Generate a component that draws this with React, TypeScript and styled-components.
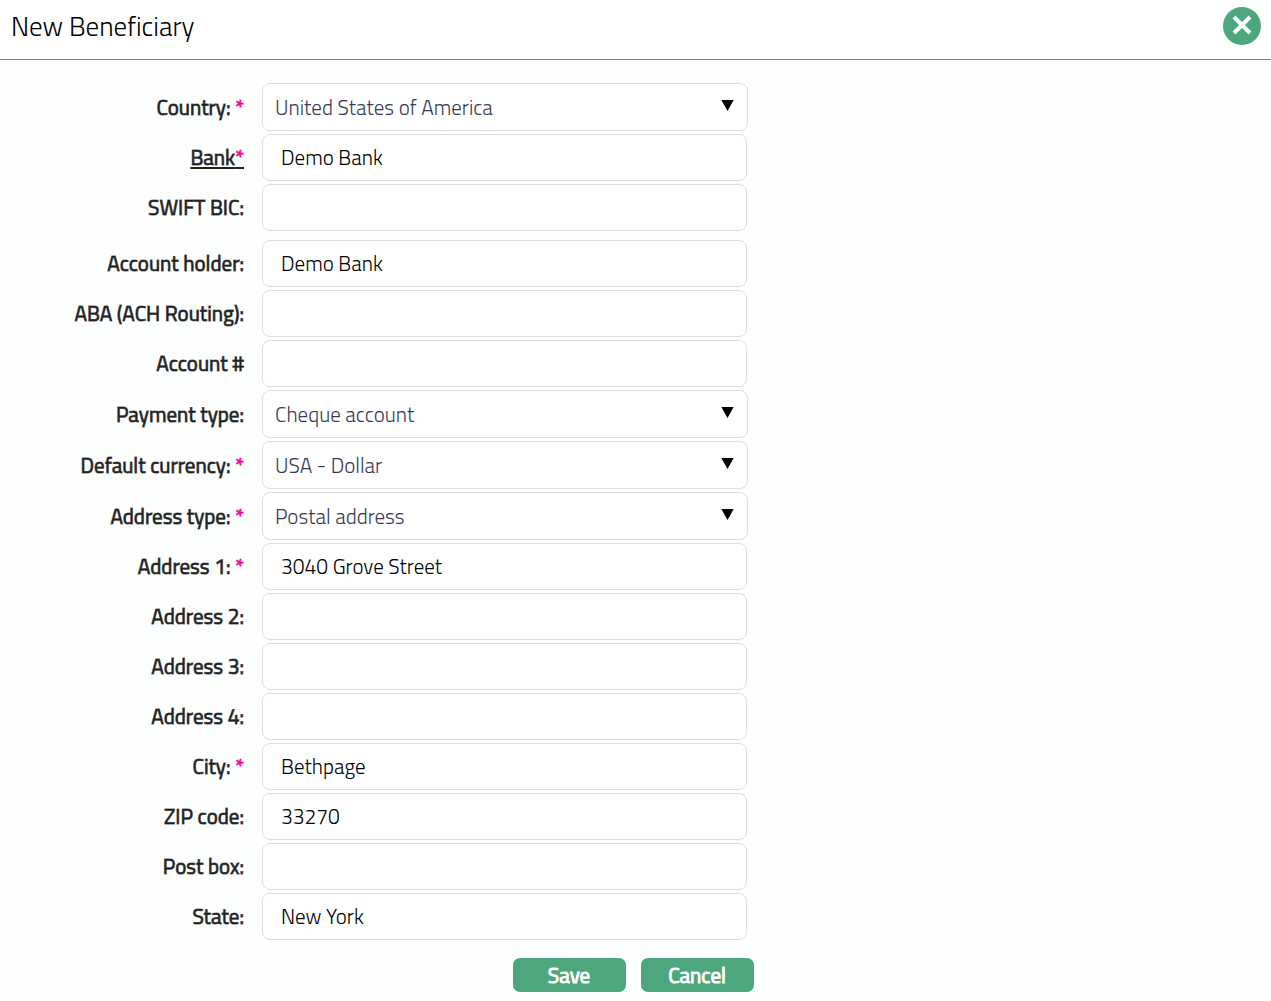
import React from "react";
import styled, { createGlobalStyle } from "styled-components";

const GlobalStyle = createGlobalStyle`
  *, *::before, *::after { box-sizing: border-box; }
  body {
    margin: 0;
    background: #fdfffe;
    color: #212121;
    font-family: "Titillium Web", Roboto, "Liberation Sans", sans-serif;
    font-size: 21px;
  }
`;

const Header = styled.header`
  display: flex;
  align-items: center;
  justify-content: space-between;
  height: 60px;
  padding: 0 10px 8px 11px;
  background: #fff;
  border-bottom: 1px solid #777c7b;
`;

const Title = styled.h1`
  margin: 0;
  color: #000;
  font-size: 27px;
  line-height: 32px;
  font-weight: 300;
`;

const CloseButton = styled.button`
  display: flex;
  width: 38px;
  height: 38px;
  padding: 0;
  border: 0;
  border-radius: 50%;
  background: #4da77c;
  cursor: pointer;
`;

const Fields = styled.div`
  display: flex;
  flex-direction: column;
  gap: 3px;
  padding-top: 23px;
  background: #fcfffe;
`;

const Row = styled.div<{ $spaced?: boolean }>`
  display: grid;
  grid-template-columns: 244px minmax(0, 486px);
  column-gap: 18px;
  align-items: center;
  margin-top: ${(p) => (p.$spaced ? "6px" : "0")};
`;

const Label = styled.label<{ $underlined?: boolean }>`
  justify-self: end;
  padding-bottom: 1px;
  line-height: 24px;
  font-weight: 400;
  -webkit-text-stroke: 1px rgba(33, 33, 33, 0.7);
  white-space: pre;
  text-decoration: ${(p) => (p.$underlined ? "underline" : "none")};
  text-decoration-color: #212121;
  text-decoration-thickness: 2px;
  text-underline-offset: 2px;
`;

const Required = styled.span`
  color: #f5009b;
  -webkit-text-stroke: 1px rgba(245, 0, 155, 0.7);
`;

const TextInput = styled.input`
  width: calc(100% - 1px);
  height: 47px;
  padding: 0 18px 1px;
  border: 1px solid #dcdfde;
  border-radius: 8px;
  background: #fff;
  color: #000;
  font: inherit;
  font-weight: 300;
`;

const SelectBox = styled.div`
  position: relative;
`;

const Select = styled.select`
  display: block;
  width: 100%;
  height: 48px;
  padding: 0 40px 0 12px;
  border: 1px solid #dcdfde;
  border-radius: 8px;
  background: #fff;
  color: #363a58;
  font: inherit;
  font-weight: 300;
  appearance: none;
`;

const Arrow = styled.svg`
  position: absolute;
  top: 17px;
  right: 14px;
  width: 13px;
  height: 11px;
  pointer-events: none;
`;

const Footer = styled.footer`
  display: flex;
  justify-content: center;
  gap: 15px;
  padding: 18px 5px 9px 0;
`;

const ActionButton = styled.button`
  width: 113px;
  height: 34px;
  padding: 0 0 1px;
  border: 0;
  border-radius: 7px;
  background: #4da77c;
  color: #fff;
  font: inherit;
  font-weight: 400;
  -webkit-text-stroke: 1px #fff;
  cursor: pointer;
`;

type Field = {
  id: string;
  label: string;
  value?: string;
  required?: boolean;
  select?: boolean;
  underlined?: boolean;
  spaced?: boolean;
};

const fields: Field[] = [
  { id: "country", label: "Country: ", value: "United States of America", required: true, select: true },
  { id: "bank", label: "Bank", value: "Demo Bank", required: true, underlined: true },
  { id: "swift", label: "SWIFT BIC:" },
  { id: "holder", label: "Account holder:", value: "Demo Bank", spaced: true },
  { id: "aba", label: "ABA (ACH Routing):" },
  { id: "account", label: "Account #" },
  { id: "payment", label: "Payment type:", value: "Cheque account", select: true },
  { id: "currency", label: "Default currency: ", value: "USA - Dollar", required: true, select: true },
  { id: "addressType", label: "Address type: ", value: "Postal address", required: true, select: true },
  { id: "address1", label: "Address 1: ", value: "3040 Grove Street", required: true },
  { id: "address2", label: "Address 2:" },
  { id: "address3", label: "Address 3:" },
  { id: "address4", label: "Address 4:" },
  { id: "city", label: "City: ", value: "Bethpage", required: true },
  { id: "zip", label: "ZIP code:", value: "33270" },
  { id: "postBox", label: "Post box:" },
  { id: "state", label: "State:", value: "New York" },
];

function FieldRow({ field }: { field: Field }) {
  return (
    <Row $spaced={field.spaced}>
      <Label htmlFor={field.id} $underlined={field.underlined}>
        {field.label}
        {field.required && <Required>*</Required>}
      </Label>
      {field.select ? (
        <SelectBox>
          <Select id={field.id} name={field.id} defaultValue={field.value}>
            <option>{field.value}</option>
          </Select>
          <Arrow viewBox="0 0 13 11" aria-hidden="true">
            <path d="M0.3 0H12.7L6.5 11Z" fill="#000" />
          </Arrow>
        </SelectBox>
      ) : (
        <TextInput id={field.id} name={field.id} type="text" defaultValue={field.value} />
      )}
    </Row>
  );
}

export default function App() {
  return (
    <>
      <GlobalStyle />
      <Header>
        <Title>New Beneficiary</Title>
        <CloseButton type="button" aria-label="Close">
          <svg width="38" height="38" viewBox="0 0 38 38" aria-hidden="true">
            <path d="M11 10L27 26M27 10L11 26" stroke="#fff" strokeWidth="4" />
          </svg>
        </CloseButton>
      </Header>
      <form onSubmit={(event) => event.preventDefault()}>
        <Fields>
          {fields.map((field) => (
            <FieldRow key={field.id} field={field} />
          ))}
        </Fields>
        <Footer>
          <ActionButton type="submit">Save</ActionButton>
          <ActionButton type="button">Cancel</ActionButton>
        </Footer>
      </form>
    </>
  );
}
